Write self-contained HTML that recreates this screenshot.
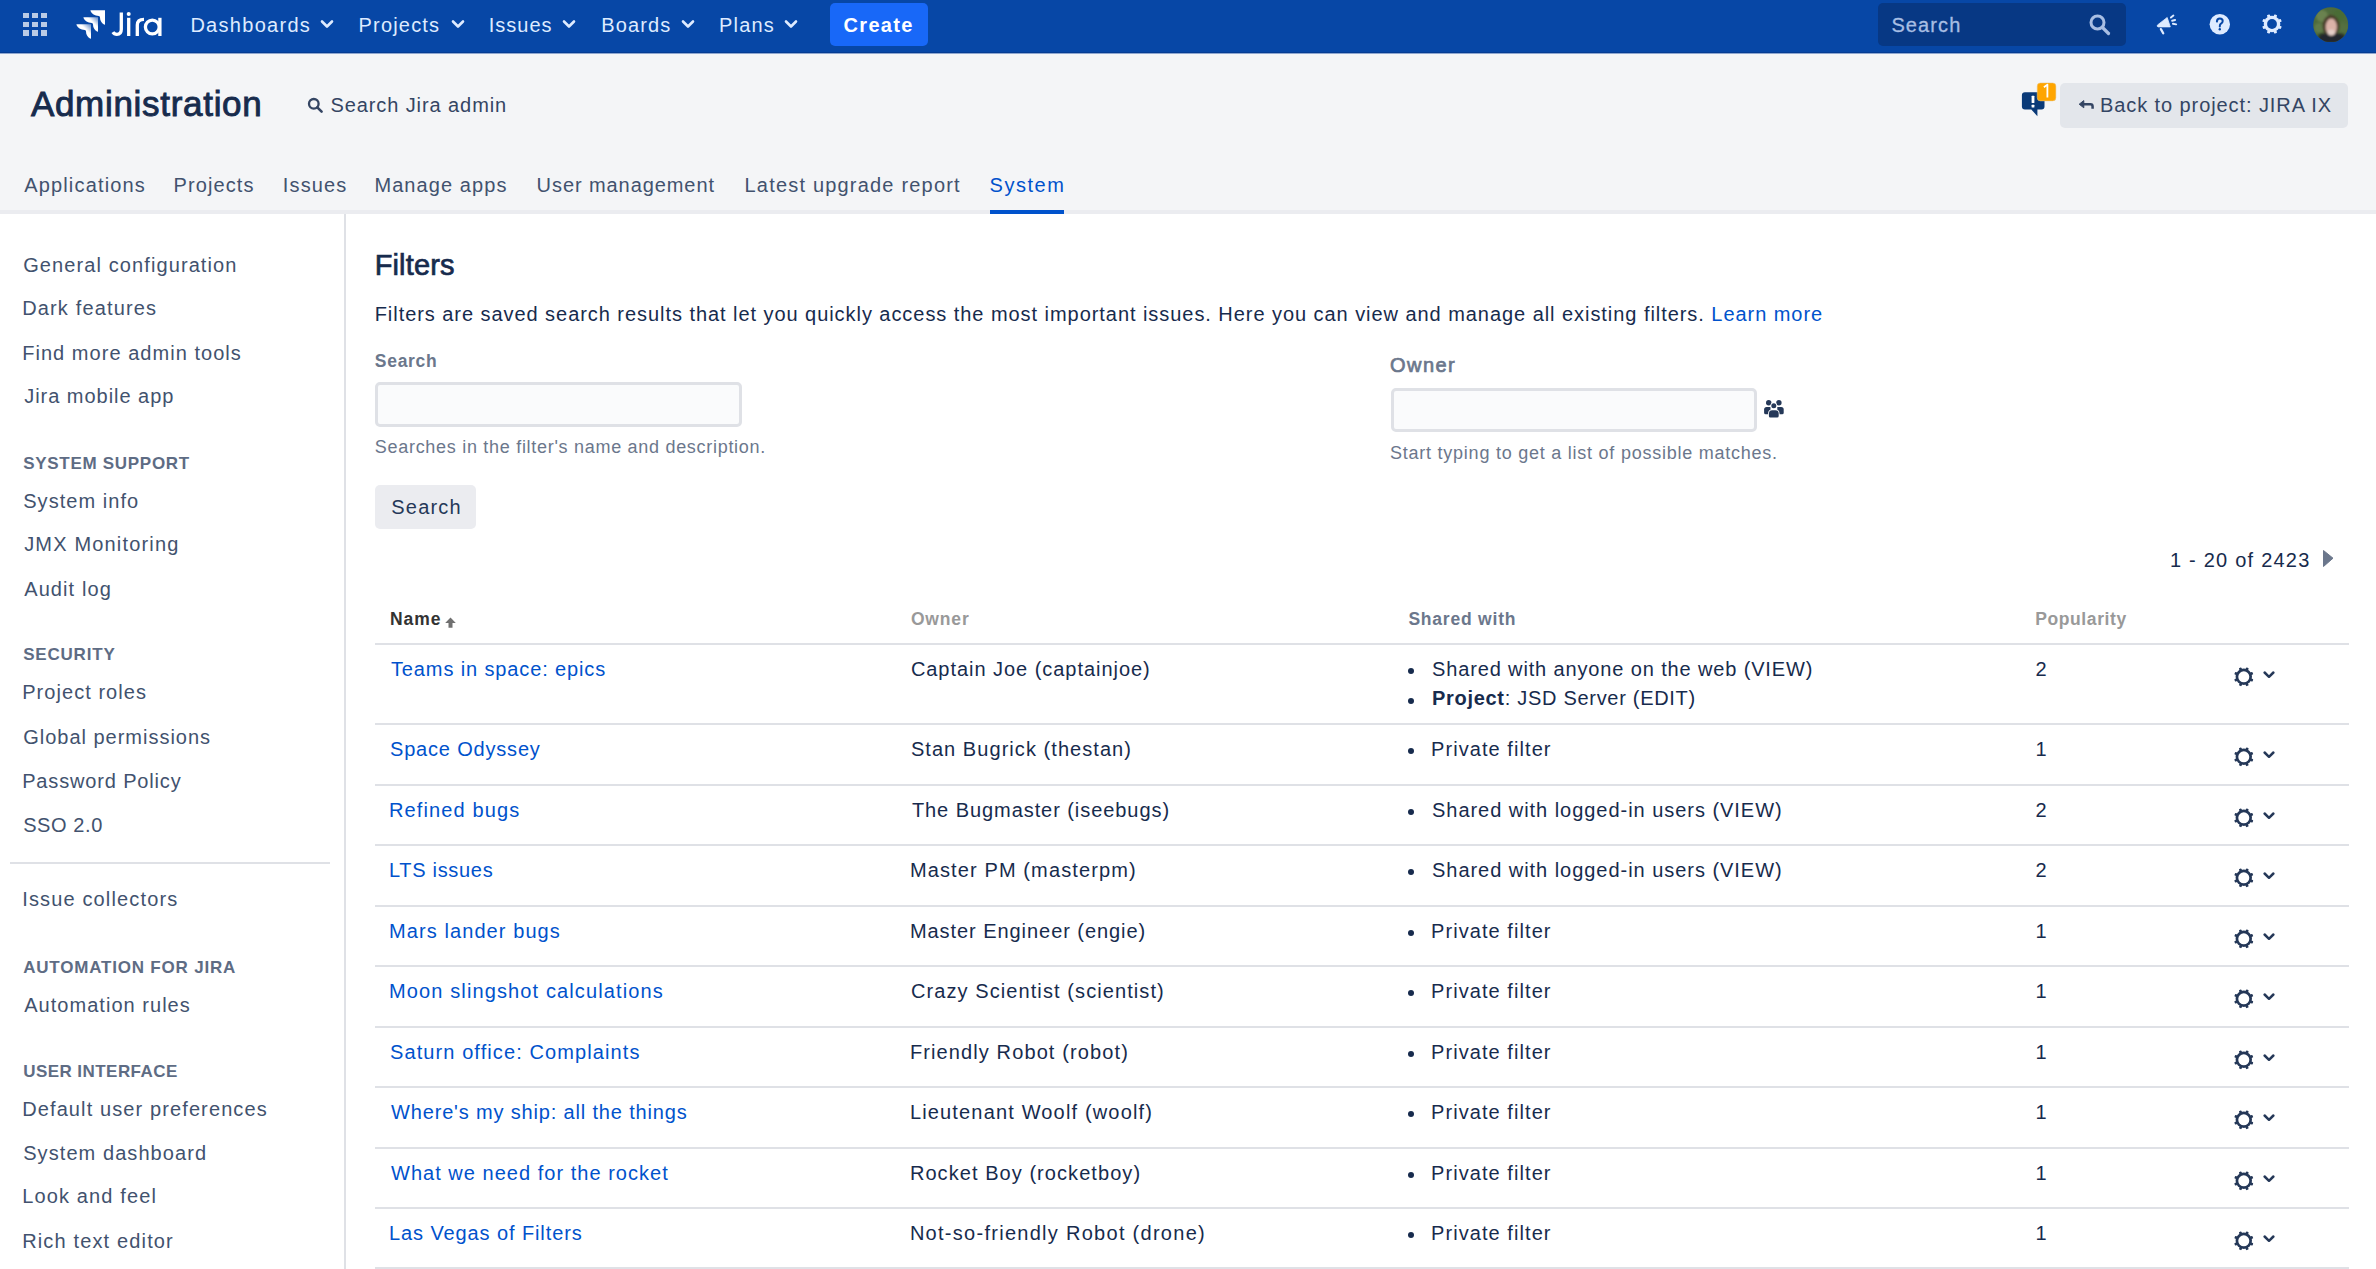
<!DOCTYPE html>
<html><head><meta charset="utf-8"><title>Filters - Jira Administration</title>
<style>
html,body{margin:0;padding:0;width:2376px;height:1269px;overflow:hidden;background:#fff;font-family:"Liberation Sans", sans-serif}
.t{position:absolute;white-space:nowrap;font-family:"Liberation Sans", sans-serif}
b{font-weight:700}
</style></head><body>
<div style="position:absolute;left:0px;top:0px;width:2376px;height:53px;background:#0747A6"></div>
<div style="position:absolute;left:0px;top:53px;width:2376px;height:157px;background:#F4F5F7"></div>
<div style="position:absolute;left:0px;top:52px;width:2376px;height:1px;background:#053C92"></div>
<div style="position:absolute;left:0px;top:53px;width:2376px;height:1px;background:#8FA7D0"></div>
<div style="position:absolute;left:0px;top:210px;width:2376px;height:4px;background:#EBECF0"></div>
<div style="position:absolute;left:344px;top:214px;width:2px;height:1055px;background:#DFE1E6"></div>
<div style="position:absolute;left:23px;top:12.6px;width:6px;height:5.6px;background:rgba(255,255,255,0.72)"></div>
<div style="position:absolute;left:23px;top:21.5px;width:6px;height:5.6px;background:rgba(255,255,255,0.72)"></div>
<div style="position:absolute;left:23px;top:30.4px;width:6px;height:5.6px;background:rgba(255,255,255,0.72)"></div>
<div style="position:absolute;left:32px;top:12.6px;width:6px;height:5.6px;background:rgba(255,255,255,0.72)"></div>
<div style="position:absolute;left:32px;top:21.5px;width:6px;height:5.6px;background:rgba(255,255,255,0.72)"></div>
<div style="position:absolute;left:32px;top:30.4px;width:6px;height:5.6px;background:rgba(255,255,255,0.72)"></div>
<div style="position:absolute;left:41px;top:12.6px;width:6px;height:5.6px;background:rgba(255,255,255,0.72)"></div>
<div style="position:absolute;left:41px;top:21.5px;width:6px;height:5.6px;background:rgba(255,255,255,0.72)"></div>
<div style="position:absolute;left:41px;top:30.4px;width:6px;height:5.6px;background:rgba(255,255,255,0.72)"></div>
<svg style="position:absolute;left:70px;top:5px" width="40" height="40" viewBox="0 0 40 40">
<defs>
<linearGradient id="lg1" x1="1" y1="0" x2="0.35" y2="0.65"><stop offset="0" stop-color="#fff" stop-opacity="0.35"/><stop offset="0.55" stop-color="#fff" stop-opacity="1"/></linearGradient>
</defs>
<path d="M20.8,5.2 H35 V19.2 C35,19.8 34.4,19.9 34,19.6 C31.5,18 30,15.5 30,12.5 C30,11.8 29.6,11.2 28.8,11.1 C24.6,10.6 21.8,8.8 20.5,6 C20.3,5.6 20.4,5.2 20.8,5.2 Z" fill="#fff"/>
<path d="M13.8,12.2 H28 V26.2 C28,26.8 27.4,26.9 27,26.6 C24.5,25 23,22.5 23,19.5 C23,18.8 22.6,18.2 21.8,18.1 C17.6,17.6 14.8,15.8 13.5,13 C13.3,12.6 13.4,12.2 13.8,12.2 Z" fill="url(#lg1)"/>
<path d="M6.8,19.2 H21 V33.2 C21,33.8 20.4,33.9 20,33.6 C17.5,32 16,29.5 16,26.5 C16,25.8 15.6,25.2 14.8,25.1 C10.6,24.6 7.8,22.8 6.5,20 C6.3,19.6 6.4,19.2 6.8,19.2 Z" fill="url(#lg1)"/>
</svg>
<svg style="position:absolute;left:105px;top:8px" width="62" height="32" viewBox="105 8 62 32" fill="none" stroke="#fff" stroke-width="3.3">
<path d="M121.3,12.6 V29.2 Q121.3,34.3 116.9,34.3 Q114.2,34.3 112.9,32.1" stroke-linecap="butt"/>
<path d="M128.7,17.8 V36"/><circle cx="128.7" cy="13.9" r="2" fill="#fff" stroke="none"/>
<path d="M137.3,36 V25 Q137.3,19.3 144,19.3"/>
<circle cx="152.3" cy="27" r="6.9"/><path d="M159.9,17.8 V36"/>
</svg>
<div class="t " style="left:190.4px;top:14.67px;font-size:20px;line-height:20px;color:#DEEBFF;font-weight:400;letter-spacing:1.289px;">Dashboards</div>
<svg style="position:absolute;left:320.4px;top:19px" width="14" height="10" viewBox="0 0 14 10"><path d="M2 2.5 L7 7.5 L12 2.5" fill="none" stroke="#DEEBFF" stroke-width="2.6" stroke-linecap="round" stroke-linejoin="round"/></svg>
<div class="t " style="left:358.6px;top:14.67px;font-size:20px;line-height:20px;color:#DEEBFF;font-weight:400;letter-spacing:1.171px;">Projects</div>
<svg style="position:absolute;left:451px;top:19px" width="14" height="10" viewBox="0 0 14 10"><path d="M2 2.5 L7 7.5 L12 2.5" fill="none" stroke="#DEEBFF" stroke-width="2.6" stroke-linecap="round" stroke-linejoin="round"/></svg>
<div class="t " style="left:488.8px;top:14.67px;font-size:20px;line-height:20px;color:#DEEBFF;font-weight:400;letter-spacing:1.0px;">Issues</div>
<svg style="position:absolute;left:562.4px;top:19px" width="14" height="10" viewBox="0 0 14 10"><path d="M2 2.5 L7 7.5 L12 2.5" fill="none" stroke="#DEEBFF" stroke-width="2.6" stroke-linecap="round" stroke-linejoin="round"/></svg>
<div class="t " style="left:601.2px;top:14.67px;font-size:20px;line-height:20px;color:#DEEBFF;font-weight:400;letter-spacing:1.16px;">Boards</div>
<svg style="position:absolute;left:681px;top:19px" width="14" height="10" viewBox="0 0 14 10"><path d="M2 2.5 L7 7.5 L12 2.5" fill="none" stroke="#DEEBFF" stroke-width="2.6" stroke-linecap="round" stroke-linejoin="round"/></svg>
<div class="t " style="left:719.0px;top:14.67px;font-size:20px;line-height:20px;color:#DEEBFF;font-weight:400;letter-spacing:1.2px;">Plans</div>
<svg style="position:absolute;left:784.3px;top:19px" width="14" height="10" viewBox="0 0 14 10"><path d="M2 2.5 L7 7.5 L12 2.5" fill="none" stroke="#DEEBFF" stroke-width="2.6" stroke-linecap="round" stroke-linejoin="round"/></svg>
<div style="position:absolute;left:830px;top:3px;width:98px;height:43px;background:#1868F8;border-radius:5px"></div>
<div class="t " style="left:843.6px;top:15.47px;font-size:20px;line-height:20px;color:#fff;font-weight:700;letter-spacing:1.28px;">Create</div>
<div style="position:absolute;left:1878px;top:3px;width:248px;height:43px;background:#073884;border-radius:5px"></div>
<div class="t " style="left:1891.4px;top:15.37px;font-size:20px;line-height:20px;color:#A8BEE3;font-weight:400;letter-spacing:1.12px;-webkit-text-stroke:0.3px #A8BEE3">Search</div>
<svg style="position:absolute;left:2088px;top:13px" width="24" height="24" viewBox="0 0 24 24"><circle cx="9.5" cy="9.5" r="6.5" fill="none" stroke="#A8BEE3" stroke-width="3"/><path d="M14.5 14.5 L20.5 20.5" stroke="#A8BEE3" stroke-width="3.2" stroke-linecap="round"/></svg>
<svg style="position:absolute;left:2150px;top:8px" width="30" height="30" viewBox="0 0 30 30">
<path d="M7.6,16.9 Q6.3,18.3 8.2,18.9 L20.3,18.9 L17.2,9.5 Z" fill="#DEEBFF" stroke="#DEEBFF" stroke-width="0.8" stroke-linejoin="round"/>
<path d="M10.9,21.1 L13.2,25.2" stroke="#DEEBFF" stroke-width="2.3" stroke-linecap="round"/>
<path d="M20.9,9.6 L23.4,7.6 M22.1,12.7 L25.1,12 M22.9,15.7 L26.2,16.4" stroke="#DEEBFF" stroke-width="1.9" stroke-linecap="round"/>
</svg>
<svg style="position:absolute;left:2209px;top:14px" width="22" height="22" viewBox="0 0 22 22"><circle cx="10.8" cy="10.2" r="10.2" fill="#DEEBFF"/>
<path d="M7.9,7.6 Q8,4.4 10.9,4.4 Q13.7,4.4 13.7,7.1 Q13.7,8.8 12,9.7 Q10.8,10.4 10.8,11.9 L10.8,12.4" fill="none" stroke="#0747A6" stroke-width="2" stroke-linecap="round"/>
<circle cx="10.8" cy="15.2" r="1.2" fill="#0747A6"/></svg>
<svg style="position:absolute;left:2261.30px;top:13.20px" width="22.00" height="22.00" viewBox="-11.00 -11.00 22.00 22.00"><circle r="8.3" fill="#DEEBFF"/><rect x="-1.50" y="-10.00" width="3.00" height="10.00" rx="0.7" transform="rotate(22.5)" fill="#DEEBFF"/><rect x="-1.50" y="-10.00" width="3.00" height="10.00" rx="0.7" transform="rotate(67.5)" fill="#DEEBFF"/><rect x="-1.50" y="-10.00" width="3.00" height="10.00" rx="0.7" transform="rotate(112.5)" fill="#DEEBFF"/><rect x="-1.50" y="-10.00" width="3.00" height="10.00" rx="0.7" transform="rotate(157.5)" fill="#DEEBFF"/><rect x="-1.50" y="-10.00" width="3.00" height="10.00" rx="0.7" transform="rotate(202.5)" fill="#DEEBFF"/><rect x="-1.50" y="-10.00" width="3.00" height="10.00" rx="0.7" transform="rotate(247.5)" fill="#DEEBFF"/><rect x="-1.50" y="-10.00" width="3.00" height="10.00" rx="0.7" transform="rotate(292.5)" fill="#DEEBFF"/><rect x="-1.50" y="-10.00" width="3.00" height="10.00" rx="0.7" transform="rotate(337.5)" fill="#DEEBFF"/><circle r="4.9" fill="#0747A6"/></svg>
<svg style="position:absolute;left:2313px;top:6.5px" width="35.5" height="35.5" viewBox="0 0 35.5 35.5">
<defs><clipPath id="avc"><circle cx="17.75" cy="17.75" r="17.5"/></clipPath><filter id="avb" x="-20%" y="-20%" width="140%" height="140%"><feGaussianBlur stdDeviation="0.9"/></filter></defs>
<g clip-path="url(#avc)"><rect width="35.5" height="35.5" fill="#4f6b3c"/>
<g filter="url(#avb)">
<circle cx="9" cy="9" r="6" fill="#6a8250"/><circle cx="26" cy="8" r="6" fill="#4a6c34"/><circle cx="30" cy="21" r="5" fill="#55703f"/><circle cx="6" cy="21" r="5" fill="#607a48"/><circle cx="9" cy="30" r="4" fill="#2f3d28"/><circle cx="28" cy="30" r="4" fill="#2f3a2c"/>
<ellipse cx="18" cy="19" rx="8.5" ry="11" fill="#4a3e2a"/>
<path d="M4,36 Q6,27 13,26.5 L23,26.5 Q31,27 33,36 Z" fill="#24252d"/>
<ellipse cx="18.3" cy="20" rx="5.6" ry="8.4" fill="#dcb3a8"/>
<ellipse cx="18.3" cy="25.5" rx="3.6" ry="3" fill="#e6cfc8"/>
</g></g></svg>
<div class="t " style="left:30.9px;top:86.37px;font-size:35px;line-height:35px;color:#172B4D;font-weight:400;letter-spacing:0.7px;-webkit-text-stroke:0.9px #172B4D">Administration</div>
<svg style="position:absolute;left:307px;top:97px" width="17" height="17" viewBox="0 0 17 17"><circle cx="6.8" cy="6.8" r="4.8" fill="none" stroke="#344563" stroke-width="2.3"/><path d="M10.3 10.3 L14.6 14.6" stroke="#344563" stroke-width="2.6" stroke-linecap="round"/></svg>
<div class="t " style="left:330.4px;top:95.17px;font-size:20px;line-height:20px;color:#344563;font-weight:400;letter-spacing:0.913px;">Search Jira admin</div>
<svg style="position:absolute;left:2015px;top:78px" width="48" height="44" viewBox="0 0 48 44">
<path d="M10,14.2 H26.5 Q29.5,14.2 29.5,17.2 V28.6 Q29.5,31.6 26.5,31.6 H22.4 V38.3 L16.3,31.6 H10 Q6.9,31.6 6.9,28.6 V17.2 Q6.9,14.2 10,14.2 Z" fill="#0A3A78"/>
<rect x="16.6" y="17.7" width="2.8" height="7.3" rx="0.5" fill="#fff"/><rect x="16.6" y="26.7" width="2.8" height="2.8" rx="0.5" fill="#fff"/>
<rect x="22.2" y="4.9" width="18.7" height="18" rx="3.2" fill="#FFA500" stroke="#E8C98A" stroke-width="0.5"/>
<path d="M28.9,9.2 L32.4,6.6 L32.4,19.6" fill="none" stroke="#fff" stroke-width="1.8" stroke-linejoin="round"/>
</svg>
<div style="position:absolute;left:2060px;top:83px;width:288px;height:45px;background:#E3E6EB;border-radius:5px"></div>
<svg style="position:absolute;left:2078px;top:99px" width="17" height="12" viewBox="0 0 17 12"><path d="M5.8 1.6 L1.2 5.2 L5.8 8.8 Z" fill="#344563" stroke="#344563" stroke-width="1" stroke-linejoin="round"/><path d="M4.5 5.2 L12.5 5.2 Q14.6 5.2 14.6 7.4 L14.6 9.8" fill="none" stroke="#344563" stroke-width="2.5"/></svg>
<div class="t " style="left:2100.0px;top:94.97px;font-size:20px;line-height:20px;color:#344563;font-weight:400;letter-spacing:0.913px;">Back to project: JIRA IX</div>
<div class="t " style="left:24.2px;top:174.87px;font-size:20px;line-height:20px;color:#42526E;font-weight:400;letter-spacing:1.164px;">Applications</div>
<div class="t " style="left:173.5px;top:174.87px;font-size:20px;line-height:20px;color:#42526E;font-weight:400;letter-spacing:1.114px;">Projects</div>
<div class="t " style="left:282.8px;top:174.87px;font-size:20px;line-height:20px;color:#42526E;font-weight:400;letter-spacing:1.14px;">Issues</div>
<div class="t " style="left:374.4px;top:174.87px;font-size:20px;line-height:20px;color:#42526E;font-weight:400;letter-spacing:1.08px;">Manage apps</div>
<div class="t " style="left:536.6px;top:174.87px;font-size:20px;line-height:20px;color:#42526E;font-weight:400;letter-spacing:0.921px;">User management</div>
<div class="t " style="left:744.5px;top:174.87px;font-size:20px;line-height:20px;color:#42526E;font-weight:400;letter-spacing:1.195px;">Latest upgrade report</div>
<div class="t " style="left:989.5px;top:174.87px;font-size:20px;line-height:20px;color:#0052CC;font-weight:400;letter-spacing:1.54px;">System</div>
<div style="position:absolute;left:990px;top:210px;width:74px;height:4px;background:#0052CC"></div>
<div class="t " style="left:23.2px;top:255.37px;font-size:20px;line-height:20px;color:#42526E;font-weight:400;letter-spacing:1.1px;">General configuration</div>
<div class="t " style="left:22.2px;top:297.97px;font-size:20px;line-height:20px;color:#42526E;font-weight:400;letter-spacing:1.15px;">Dark features</div>
<div class="t " style="left:22.2px;top:342.97px;font-size:20px;line-height:20px;color:#42526E;font-weight:400;letter-spacing:1.04px;">Find more admin tools</div>
<div class="t " style="left:24.2px;top:385.87px;font-size:20px;line-height:20px;color:#42526E;font-weight:400;letter-spacing:0.971px;">Jira mobile app</div>
<div class="t " style="left:23.2px;top:455.11px;font-size:17px;line-height:17px;color:#5E6C84;font-weight:700;letter-spacing:0.708px;">SYSTEM SUPPORT</div>
<div class="t " style="left:23.2px;top:491.47px;font-size:20px;line-height:20px;color:#42526E;font-weight:400;letter-spacing:1.05px;">System info</div>
<div class="t " style="left:24.2px;top:534.37px;font-size:20px;line-height:20px;color:#42526E;font-weight:400;letter-spacing:1.169px;">JMX Monitoring</div>
<div class="t " style="left:24.2px;top:579.07px;font-size:20px;line-height:20px;color:#42526E;font-weight:400;letter-spacing:1.1px;">Audit log</div>
<div class="t " style="left:23.2px;top:646.41px;font-size:17px;line-height:17px;color:#5E6C84;font-weight:700;letter-spacing:0.8px;">SECURITY</div>
<div class="t " style="left:22.2px;top:682.07px;font-size:20px;line-height:20px;color:#42526E;font-weight:400;letter-spacing:1.05px;">Project roles</div>
<div class="t " style="left:23.2px;top:727.27px;font-size:20px;line-height:20px;color:#42526E;font-weight:400;letter-spacing:0.988px;">Global permissions</div>
<div class="t " style="left:22.2px;top:770.67px;font-size:20px;line-height:20px;color:#42526E;font-weight:400;letter-spacing:0.843px;">Password Policy</div>
<div class="t " style="left:23.2px;top:815.27px;font-size:20px;line-height:20px;color:#42526E;font-weight:400;letter-spacing:0.583px;">SSO 2.0</div>
<div class="t " style="left:22.2px;top:889.47px;font-size:20px;line-height:20px;color:#42526E;font-weight:400;letter-spacing:1.147px;">Issue collectors</div>
<div class="t " style="left:23.2px;top:958.81px;font-size:17px;line-height:17px;color:#5E6C84;font-weight:700;letter-spacing:0.8px;">AUTOMATION FOR JIRA</div>
<div class="t " style="left:24.2px;top:995.17px;font-size:20px;line-height:20px;color:#42526E;font-weight:400;letter-spacing:1.033px;">Automation rules</div>
<div class="t " style="left:23.2px;top:1062.51px;font-size:17px;line-height:17px;color:#5E6C84;font-weight:700;letter-spacing:0.446px;">USER INTERFACE</div>
<div class="t " style="left:22.2px;top:1098.87px;font-size:20px;line-height:20px;color:#42526E;font-weight:400;letter-spacing:1.109px;">Default user preferences</div>
<div class="t " style="left:23.2px;top:1143.47px;font-size:20px;line-height:20px;color:#42526E;font-weight:400;letter-spacing:1.073px;">System dashboard</div>
<div class="t " style="left:22.2px;top:1186.27px;font-size:20px;line-height:20px;color:#42526E;font-weight:400;letter-spacing:1.133px;">Look and feel</div>
<div class="t " style="left:22.2px;top:1231.07px;font-size:20px;line-height:20px;color:#42526E;font-weight:400;letter-spacing:1.147px;">Rich text editor</div>
<div style="position:absolute;left:10px;top:862px;width:320px;height:2px;background:#DFE1E6"></div>
<div class="t " style="left:374.7px;top:251.25px;font-size:29px;line-height:29px;color:#172B4D;font-weight:400;letter-spacing:0.133px;-webkit-text-stroke:0.7px #172B4D">Filters</div>
<div class="t " style="left:374.7px;top:303.97px;font-size:20px;line-height:20px;color:#172B4D;font-weight:400;letter-spacing:0.947px;">Filters are saved search results that let you quickly access the most important issues. Here you can view and manage all existing filters. <span style="color:#0052CC">Learn more</span></div>
<div class="t " style="left:374.8px;top:353.19px;font-size:17.5px;line-height:17.5px;color:#6B778C;font-weight:700;letter-spacing:0.72px;">Search</div>
<div style="position:absolute;left:375px;top:382px;width:367px;height:45px;background:#FAFBFC;border:3px solid #DFE1E6;border-radius:5px;box-sizing:border-box"></div>
<div class="t " style="left:374.8px;top:438.26px;font-size:18px;line-height:18px;color:#6B778C;font-weight:400;letter-spacing:0.707px;">Searches in the filter's name and description.</div>
<div style="position:absolute;left:375px;top:485px;width:101px;height:44px;background:#EBECF0;border-radius:5px"></div>
<div class="t " style="left:391.3px;top:497.27px;font-size:20px;line-height:20px;color:#253858;font-weight:400;letter-spacing:1.2px;">Search</div>
<div class="t " style="left:1390.0px;top:355.07px;font-size:20px;line-height:20px;color:#6B778C;font-weight:400;letter-spacing:1.45px;-webkit-text-stroke:0.7px #6B778C">Owner</div>
<div style="position:absolute;left:1391px;top:388px;width:366px;height:44px;background:#FAFBFC;border:3px solid #DFE1E6;border-radius:5px;box-sizing:border-box"></div>
<svg style="position:absolute;left:1760px;top:396px" width="28" height="26" viewBox="1760 396 28 26">
<circle cx="1768.7" cy="402.7" r="2.7" fill="#253858"/><circle cx="1778.9" cy="402.7" r="2.7" fill="#253858"/>
<path d="M1764.1,409.6 Q1764.1,407.1 1766.6,407.1 L1770.5,407.1 L1770.5,414.3 L1765.6,414.3 Q1764.1,414.3 1764.1,412.8 Z" fill="#253858"/>
<path d="M1783.7,409.6 Q1783.7,407.1 1781.2,407.1 L1777.3,407.1 L1777.3,414.3 L1782.2,414.3 Q1783.7,414.3 1783.7,412.8 Z" fill="#253858"/>
<circle cx="1773.8" cy="405.8" r="3.3" fill="#fff"/><circle cx="1773.8" cy="405.8" r="2.5" fill="#253858"/>
<path d="M1768.1,413.2 Q1768.1,409.4 1771.9,409.4 L1775.7,409.4 Q1779.5,409.4 1779.5,413.2 L1779.5,416.2 Q1779.5,418.3 1777.4,418.3 L1770.2,418.3 Q1768.1,418.3 1768.1,416.2 Z" fill="#fff"/>
<path d="M1768.9,413.6 Q1768.9,410.2 1772.3,410.2 L1775.3,410.2 Q1778.7,410.2 1778.7,413.6 L1778.7,416 Q1778.7,417.5 1777.2,417.5 L1770.4,417.5 Q1768.9,417.5 1768.9,416 Z" fill="#253858"/>
</svg>
<div class="t " style="left:1390.0px;top:444.46px;font-size:18px;line-height:18px;color:#6B778C;font-weight:400;letter-spacing:0.759px;">Start typing to get a list of possible matches.</div>
<div class="t " style="left:2169.9px;top:550.07px;font-size:20px;line-height:20px;color:#172B4D;font-weight:400;letter-spacing:1.231px;">1 - 20 of 2423</div>
<svg style="position:absolute;left:2322px;top:549px" width="13" height="19" viewBox="0 0 13 19"><path d="M1.5 1.5 L11 9.2 L1.5 17.5 Z" fill="#6B778C" stroke="#6B778C" stroke-width="1" stroke-linejoin="round"/></svg>
<div class="t " style="left:390.0px;top:610.69px;font-size:17.5px;line-height:17.5px;color:#333333;font-weight:700;letter-spacing:0.9px;">Name</div>
<svg style="position:absolute;left:444px;top:616px" width="13" height="13" viewBox="0 0 13 13"><path d="M6.5 1.5 L11.8 7 L8.5 7 L8.5 11.8 L4.5 11.8 L4.5 7 L1.2 7 Z" fill="#707070"/></svg>
<div class="t " style="left:910.9px;top:610.89px;font-size:17.5px;line-height:17.5px;color:#999999;font-weight:700;letter-spacing:0.85px;">Owner</div>
<div class="t " style="left:1408.4px;top:610.89px;font-size:17.5px;line-height:17.5px;color:#6B778C;font-weight:700;letter-spacing:0.79px;">Shared with</div>
<div class="t " style="left:2035.2px;top:610.99px;font-size:17.5px;line-height:17.5px;color:#999999;font-weight:700;letter-spacing:0.611px;">Popularity</div>
<div style="position:absolute;left:375px;top:643px;width:1974px;height:2px;background:#DFE1E6"></div>
<div class="t " style="left:391.0px;top:659.07px;font-size:20px;line-height:20px;color:#0052CC;font-weight:400;letter-spacing:0.87px;">Teams in space: epics</div>
<div class="t " style="left:910.9px;top:659.07px;font-size:20px;line-height:20px;color:#172B4D;font-weight:400;letter-spacing:0.957px;">Captain Joe (captainjoe)</div>
<div style="position:absolute;left:1407.5px;top:668.3px;width:6.0px;height:6.0px;background:#172B4D;border-radius:50%"></div>
<div class="t " style="left:1432.0px;top:659.07px;font-size:20px;line-height:20px;color:#172B4D;font-weight:400;letter-spacing:0.863px;">Shared with anyone on the web (VIEW)</div>
<div style="position:absolute;left:1407.5px;top:697.5999999999999px;width:6.0px;height:6.0px;background:#172B4D;border-radius:50%"></div>
<div class="t " style="left:1432.0px;top:688.37px;font-size:20px;line-height:20px;color:#172B4D;font-weight:400;letter-spacing:0.704px;"><b>Project</b>: JSD Server (EDIT)</div>
<div class="t " style="left:2035.5px;top:659.07px;font-size:20px;line-height:20px;color:#172B4D;font-weight:400;letter-spacing:0px;">2</div>
<svg style="position:absolute;left:2233.40px;top:665.60px" width="21.60" height="21.60" viewBox="-10.80 -10.80 21.60 21.60"><circle r="8.2" fill="#253858"/><rect x="-1.35" y="-9.80" width="2.70" height="9.80" rx="0.7" transform="rotate(22.5)" fill="#253858"/><rect x="-1.35" y="-9.80" width="2.70" height="9.80" rx="0.7" transform="rotate(67.5)" fill="#253858"/><rect x="-1.35" y="-9.80" width="2.70" height="9.80" rx="0.7" transform="rotate(112.5)" fill="#253858"/><rect x="-1.35" y="-9.80" width="2.70" height="9.80" rx="0.7" transform="rotate(157.5)" fill="#253858"/><rect x="-1.35" y="-9.80" width="2.70" height="9.80" rx="0.7" transform="rotate(202.5)" fill="#253858"/><rect x="-1.35" y="-9.80" width="2.70" height="9.80" rx="0.7" transform="rotate(247.5)" fill="#253858"/><rect x="-1.35" y="-9.80" width="2.70" height="9.80" rx="0.7" transform="rotate(292.5)" fill="#253858"/><rect x="-1.35" y="-9.80" width="2.70" height="9.80" rx="0.7" transform="rotate(337.5)" fill="#253858"/><circle r="5.5" fill="#fff"/></svg>
<svg style="position:absolute;left:2262px;top:669.7px" width="14" height="10" viewBox="0 0 14 10"><path d="M2.6 2.5 L7 6.8 L11.4 2.5" fill="none" stroke="#253858" stroke-width="2.5" stroke-linecap="round" stroke-linejoin="round"/></svg>
<div style="position:absolute;left:375px;top:723px;width:1974px;height:2px;background:#DFE1E6"></div>
<div class="t " style="left:390.0px;top:739.07px;font-size:20px;line-height:20px;color:#0052CC;font-weight:400;letter-spacing:0.817px;">Space Odyssey</div>
<div class="t " style="left:910.9px;top:739.07px;font-size:20px;line-height:20px;color:#172B4D;font-weight:400;letter-spacing:1.057px;">Stan Bugrick (thestan)</div>
<div style="position:absolute;left:1407.5px;top:748.3px;width:6.0px;height:6.0px;background:#172B4D;border-radius:50%"></div>
<div class="t " style="left:1431.0px;top:739.07px;font-size:20px;line-height:20px;color:#172B4D;font-weight:400;letter-spacing:1.069px;">Private filter</div>
<div class="t " style="left:2035.5px;top:739.07px;font-size:20px;line-height:20px;color:#172B4D;font-weight:400;letter-spacing:0px;">1</div>
<svg style="position:absolute;left:2233.40px;top:745.60px" width="21.60" height="21.60" viewBox="-10.80 -10.80 21.60 21.60"><circle r="8.2" fill="#253858"/><rect x="-1.35" y="-9.80" width="2.70" height="9.80" rx="0.7" transform="rotate(22.5)" fill="#253858"/><rect x="-1.35" y="-9.80" width="2.70" height="9.80" rx="0.7" transform="rotate(67.5)" fill="#253858"/><rect x="-1.35" y="-9.80" width="2.70" height="9.80" rx="0.7" transform="rotate(112.5)" fill="#253858"/><rect x="-1.35" y="-9.80" width="2.70" height="9.80" rx="0.7" transform="rotate(157.5)" fill="#253858"/><rect x="-1.35" y="-9.80" width="2.70" height="9.80" rx="0.7" transform="rotate(202.5)" fill="#253858"/><rect x="-1.35" y="-9.80" width="2.70" height="9.80" rx="0.7" transform="rotate(247.5)" fill="#253858"/><rect x="-1.35" y="-9.80" width="2.70" height="9.80" rx="0.7" transform="rotate(292.5)" fill="#253858"/><rect x="-1.35" y="-9.80" width="2.70" height="9.80" rx="0.7" transform="rotate(337.5)" fill="#253858"/><circle r="5.5" fill="#fff"/></svg>
<svg style="position:absolute;left:2262px;top:749.7px" width="14" height="10" viewBox="0 0 14 10"><path d="M2.6 2.5 L7 6.8 L11.4 2.5" fill="none" stroke="#253858" stroke-width="2.5" stroke-linecap="round" stroke-linejoin="round"/></svg>
<div style="position:absolute;left:375px;top:784px;width:1974px;height:2px;background:#DFE1E6"></div>
<div class="t " style="left:389.0px;top:800.07px;font-size:20px;line-height:20px;color:#0052CC;font-weight:400;letter-spacing:1.118px;">Refined bugs</div>
<div class="t " style="left:911.9px;top:800.07px;font-size:20px;line-height:20px;color:#172B4D;font-weight:400;letter-spacing:0.935px;">The Bugmaster (iseebugs)</div>
<div style="position:absolute;left:1407.5px;top:809.3px;width:6.0px;height:6.0px;background:#172B4D;border-radius:50%"></div>
<div class="t " style="left:1432.0px;top:800.07px;font-size:20px;line-height:20px;color:#172B4D;font-weight:400;letter-spacing:0.961px;">Shared with logged-in users (VIEW)</div>
<div class="t " style="left:2035.5px;top:800.07px;font-size:20px;line-height:20px;color:#172B4D;font-weight:400;letter-spacing:0px;">2</div>
<svg style="position:absolute;left:2233.40px;top:806.60px" width="21.60" height="21.60" viewBox="-10.80 -10.80 21.60 21.60"><circle r="8.2" fill="#253858"/><rect x="-1.35" y="-9.80" width="2.70" height="9.80" rx="0.7" transform="rotate(22.5)" fill="#253858"/><rect x="-1.35" y="-9.80" width="2.70" height="9.80" rx="0.7" transform="rotate(67.5)" fill="#253858"/><rect x="-1.35" y="-9.80" width="2.70" height="9.80" rx="0.7" transform="rotate(112.5)" fill="#253858"/><rect x="-1.35" y="-9.80" width="2.70" height="9.80" rx="0.7" transform="rotate(157.5)" fill="#253858"/><rect x="-1.35" y="-9.80" width="2.70" height="9.80" rx="0.7" transform="rotate(202.5)" fill="#253858"/><rect x="-1.35" y="-9.80" width="2.70" height="9.80" rx="0.7" transform="rotate(247.5)" fill="#253858"/><rect x="-1.35" y="-9.80" width="2.70" height="9.80" rx="0.7" transform="rotate(292.5)" fill="#253858"/><rect x="-1.35" y="-9.80" width="2.70" height="9.80" rx="0.7" transform="rotate(337.5)" fill="#253858"/><circle r="5.5" fill="#fff"/></svg>
<svg style="position:absolute;left:2262px;top:810.7px" width="14" height="10" viewBox="0 0 14 10"><path d="M2.6 2.5 L7 6.8 L11.4 2.5" fill="none" stroke="#253858" stroke-width="2.5" stroke-linecap="round" stroke-linejoin="round"/></svg>
<div style="position:absolute;left:375px;top:844px;width:1974px;height:2px;background:#DFE1E6"></div>
<div class="t " style="left:389.0px;top:860.07px;font-size:20px;line-height:20px;color:#0052CC;font-weight:400;letter-spacing:0.689px;">LTS issues</div>
<div class="t " style="left:909.9px;top:860.07px;font-size:20px;line-height:20px;color:#172B4D;font-weight:400;letter-spacing:1.121px;">Master PM (masterpm)</div>
<div style="position:absolute;left:1407.5px;top:869.3px;width:6.0px;height:6.0px;background:#172B4D;border-radius:50%"></div>
<div class="t " style="left:1432.0px;top:860.07px;font-size:20px;line-height:20px;color:#172B4D;font-weight:400;letter-spacing:0.961px;">Shared with logged-in users (VIEW)</div>
<div class="t " style="left:2035.5px;top:860.07px;font-size:20px;line-height:20px;color:#172B4D;font-weight:400;letter-spacing:0px;">2</div>
<svg style="position:absolute;left:2233.40px;top:866.60px" width="21.60" height="21.60" viewBox="-10.80 -10.80 21.60 21.60"><circle r="8.2" fill="#253858"/><rect x="-1.35" y="-9.80" width="2.70" height="9.80" rx="0.7" transform="rotate(22.5)" fill="#253858"/><rect x="-1.35" y="-9.80" width="2.70" height="9.80" rx="0.7" transform="rotate(67.5)" fill="#253858"/><rect x="-1.35" y="-9.80" width="2.70" height="9.80" rx="0.7" transform="rotate(112.5)" fill="#253858"/><rect x="-1.35" y="-9.80" width="2.70" height="9.80" rx="0.7" transform="rotate(157.5)" fill="#253858"/><rect x="-1.35" y="-9.80" width="2.70" height="9.80" rx="0.7" transform="rotate(202.5)" fill="#253858"/><rect x="-1.35" y="-9.80" width="2.70" height="9.80" rx="0.7" transform="rotate(247.5)" fill="#253858"/><rect x="-1.35" y="-9.80" width="2.70" height="9.80" rx="0.7" transform="rotate(292.5)" fill="#253858"/><rect x="-1.35" y="-9.80" width="2.70" height="9.80" rx="0.7" transform="rotate(337.5)" fill="#253858"/><circle r="5.5" fill="#fff"/></svg>
<svg style="position:absolute;left:2262px;top:870.7px" width="14" height="10" viewBox="0 0 14 10"><path d="M2.6 2.5 L7 6.8 L11.4 2.5" fill="none" stroke="#253858" stroke-width="2.5" stroke-linecap="round" stroke-linejoin="round"/></svg>
<div style="position:absolute;left:375px;top:905px;width:1974px;height:2px;background:#DFE1E6"></div>
<div class="t " style="left:389.0px;top:921.07px;font-size:20px;line-height:20px;color:#0052CC;font-weight:400;letter-spacing:1.087px;">Mars lander bugs</div>
<div class="t " style="left:909.9px;top:921.07px;font-size:20px;line-height:20px;color:#172B4D;font-weight:400;letter-spacing:0.945px;">Master Engineer (engie)</div>
<div style="position:absolute;left:1407.5px;top:930.3px;width:6.0px;height:6.0px;background:#172B4D;border-radius:50%"></div>
<div class="t " style="left:1431.0px;top:921.07px;font-size:20px;line-height:20px;color:#172B4D;font-weight:400;letter-spacing:1.069px;">Private filter</div>
<div class="t " style="left:2035.5px;top:921.07px;font-size:20px;line-height:20px;color:#172B4D;font-weight:400;letter-spacing:0px;">1</div>
<svg style="position:absolute;left:2233.40px;top:927.60px" width="21.60" height="21.60" viewBox="-10.80 -10.80 21.60 21.60"><circle r="8.2" fill="#253858"/><rect x="-1.35" y="-9.80" width="2.70" height="9.80" rx="0.7" transform="rotate(22.5)" fill="#253858"/><rect x="-1.35" y="-9.80" width="2.70" height="9.80" rx="0.7" transform="rotate(67.5)" fill="#253858"/><rect x="-1.35" y="-9.80" width="2.70" height="9.80" rx="0.7" transform="rotate(112.5)" fill="#253858"/><rect x="-1.35" y="-9.80" width="2.70" height="9.80" rx="0.7" transform="rotate(157.5)" fill="#253858"/><rect x="-1.35" y="-9.80" width="2.70" height="9.80" rx="0.7" transform="rotate(202.5)" fill="#253858"/><rect x="-1.35" y="-9.80" width="2.70" height="9.80" rx="0.7" transform="rotate(247.5)" fill="#253858"/><rect x="-1.35" y="-9.80" width="2.70" height="9.80" rx="0.7" transform="rotate(292.5)" fill="#253858"/><rect x="-1.35" y="-9.80" width="2.70" height="9.80" rx="0.7" transform="rotate(337.5)" fill="#253858"/><circle r="5.5" fill="#fff"/></svg>
<svg style="position:absolute;left:2262px;top:931.7px" width="14" height="10" viewBox="0 0 14 10"><path d="M2.6 2.5 L7 6.8 L11.4 2.5" fill="none" stroke="#253858" stroke-width="2.5" stroke-linecap="round" stroke-linejoin="round"/></svg>
<div style="position:absolute;left:375px;top:965px;width:1974px;height:2px;background:#DFE1E6"></div>
<div class="t " style="left:389.0px;top:981.07px;font-size:20px;line-height:20px;color:#0052CC;font-weight:400;letter-spacing:1.123px;">Moon slingshot calculations</div>
<div class="t " style="left:910.9px;top:981.07px;font-size:20px;line-height:20px;color:#172B4D;font-weight:400;letter-spacing:1.092px;">Crazy Scientist (scientist)</div>
<div style="position:absolute;left:1407.5px;top:990.3px;width:6.0px;height:6.0px;background:#172B4D;border-radius:50%"></div>
<div class="t " style="left:1431.0px;top:981.07px;font-size:20px;line-height:20px;color:#172B4D;font-weight:400;letter-spacing:1.069px;">Private filter</div>
<div class="t " style="left:2035.5px;top:981.07px;font-size:20px;line-height:20px;color:#172B4D;font-weight:400;letter-spacing:0px;">1</div>
<svg style="position:absolute;left:2233.40px;top:987.60px" width="21.60" height="21.60" viewBox="-10.80 -10.80 21.60 21.60"><circle r="8.2" fill="#253858"/><rect x="-1.35" y="-9.80" width="2.70" height="9.80" rx="0.7" transform="rotate(22.5)" fill="#253858"/><rect x="-1.35" y="-9.80" width="2.70" height="9.80" rx="0.7" transform="rotate(67.5)" fill="#253858"/><rect x="-1.35" y="-9.80" width="2.70" height="9.80" rx="0.7" transform="rotate(112.5)" fill="#253858"/><rect x="-1.35" y="-9.80" width="2.70" height="9.80" rx="0.7" transform="rotate(157.5)" fill="#253858"/><rect x="-1.35" y="-9.80" width="2.70" height="9.80" rx="0.7" transform="rotate(202.5)" fill="#253858"/><rect x="-1.35" y="-9.80" width="2.70" height="9.80" rx="0.7" transform="rotate(247.5)" fill="#253858"/><rect x="-1.35" y="-9.80" width="2.70" height="9.80" rx="0.7" transform="rotate(292.5)" fill="#253858"/><rect x="-1.35" y="-9.80" width="2.70" height="9.80" rx="0.7" transform="rotate(337.5)" fill="#253858"/><circle r="5.5" fill="#fff"/></svg>
<svg style="position:absolute;left:2262px;top:991.7px" width="14" height="10" viewBox="0 0 14 10"><path d="M2.6 2.5 L7 6.8 L11.4 2.5" fill="none" stroke="#253858" stroke-width="2.5" stroke-linecap="round" stroke-linejoin="round"/></svg>
<div style="position:absolute;left:375px;top:1026px;width:1974px;height:2px;background:#DFE1E6"></div>
<div class="t " style="left:390.0px;top:1042.07px;font-size:20px;line-height:20px;color:#0052CC;font-weight:400;letter-spacing:1.096px;">Saturn office: Complaints</div>
<div class="t " style="left:909.9px;top:1042.07px;font-size:20px;line-height:20px;color:#172B4D;font-weight:400;letter-spacing:1.114px;">Friendly Robot (robot)</div>
<div style="position:absolute;left:1407.5px;top:1051.3px;width:6.0px;height:6.0px;background:#172B4D;border-radius:50%"></div>
<div class="t " style="left:1431.0px;top:1042.07px;font-size:20px;line-height:20px;color:#172B4D;font-weight:400;letter-spacing:1.069px;">Private filter</div>
<div class="t " style="left:2035.5px;top:1042.07px;font-size:20px;line-height:20px;color:#172B4D;font-weight:400;letter-spacing:0px;">1</div>
<svg style="position:absolute;left:2233.40px;top:1048.60px" width="21.60" height="21.60" viewBox="-10.80 -10.80 21.60 21.60"><circle r="8.2" fill="#253858"/><rect x="-1.35" y="-9.80" width="2.70" height="9.80" rx="0.7" transform="rotate(22.5)" fill="#253858"/><rect x="-1.35" y="-9.80" width="2.70" height="9.80" rx="0.7" transform="rotate(67.5)" fill="#253858"/><rect x="-1.35" y="-9.80" width="2.70" height="9.80" rx="0.7" transform="rotate(112.5)" fill="#253858"/><rect x="-1.35" y="-9.80" width="2.70" height="9.80" rx="0.7" transform="rotate(157.5)" fill="#253858"/><rect x="-1.35" y="-9.80" width="2.70" height="9.80" rx="0.7" transform="rotate(202.5)" fill="#253858"/><rect x="-1.35" y="-9.80" width="2.70" height="9.80" rx="0.7" transform="rotate(247.5)" fill="#253858"/><rect x="-1.35" y="-9.80" width="2.70" height="9.80" rx="0.7" transform="rotate(292.5)" fill="#253858"/><rect x="-1.35" y="-9.80" width="2.70" height="9.80" rx="0.7" transform="rotate(337.5)" fill="#253858"/><circle r="5.5" fill="#fff"/></svg>
<svg style="position:absolute;left:2262px;top:1052.7px" width="14" height="10" viewBox="0 0 14 10"><path d="M2.6 2.5 L7 6.8 L11.4 2.5" fill="none" stroke="#253858" stroke-width="2.5" stroke-linecap="round" stroke-linejoin="round"/></svg>
<div style="position:absolute;left:375px;top:1086px;width:1974px;height:2px;background:#DFE1E6"></div>
<div class="t " style="left:391.0px;top:1102.07px;font-size:20px;line-height:20px;color:#0052CC;font-weight:400;letter-spacing:0.838px;">Where&#39;s my ship: all the things</div>
<div class="t " style="left:909.9px;top:1102.07px;font-size:20px;line-height:20px;color:#172B4D;font-weight:400;letter-spacing:1.161px;">Lieutenant Woolf (woolf)</div>
<div style="position:absolute;left:1407.5px;top:1111.3px;width:6.0px;height:6.0px;background:#172B4D;border-radius:50%"></div>
<div class="t " style="left:1431.0px;top:1102.07px;font-size:20px;line-height:20px;color:#172B4D;font-weight:400;letter-spacing:1.069px;">Private filter</div>
<div class="t " style="left:2035.5px;top:1102.07px;font-size:20px;line-height:20px;color:#172B4D;font-weight:400;letter-spacing:0px;">1</div>
<svg style="position:absolute;left:2233.40px;top:1108.60px" width="21.60" height="21.60" viewBox="-10.80 -10.80 21.60 21.60"><circle r="8.2" fill="#253858"/><rect x="-1.35" y="-9.80" width="2.70" height="9.80" rx="0.7" transform="rotate(22.5)" fill="#253858"/><rect x="-1.35" y="-9.80" width="2.70" height="9.80" rx="0.7" transform="rotate(67.5)" fill="#253858"/><rect x="-1.35" y="-9.80" width="2.70" height="9.80" rx="0.7" transform="rotate(112.5)" fill="#253858"/><rect x="-1.35" y="-9.80" width="2.70" height="9.80" rx="0.7" transform="rotate(157.5)" fill="#253858"/><rect x="-1.35" y="-9.80" width="2.70" height="9.80" rx="0.7" transform="rotate(202.5)" fill="#253858"/><rect x="-1.35" y="-9.80" width="2.70" height="9.80" rx="0.7" transform="rotate(247.5)" fill="#253858"/><rect x="-1.35" y="-9.80" width="2.70" height="9.80" rx="0.7" transform="rotate(292.5)" fill="#253858"/><rect x="-1.35" y="-9.80" width="2.70" height="9.80" rx="0.7" transform="rotate(337.5)" fill="#253858"/><circle r="5.5" fill="#fff"/></svg>
<svg style="position:absolute;left:2262px;top:1112.7px" width="14" height="10" viewBox="0 0 14 10"><path d="M2.6 2.5 L7 6.8 L11.4 2.5" fill="none" stroke="#253858" stroke-width="2.5" stroke-linecap="round" stroke-linejoin="round"/></svg>
<div style="position:absolute;left:375px;top:1147px;width:1974px;height:2px;background:#DFE1E6"></div>
<div class="t " style="left:391.0px;top:1163.07px;font-size:20px;line-height:20px;color:#0052CC;font-weight:400;letter-spacing:1.023px;">What we need for the rocket</div>
<div class="t " style="left:909.9px;top:1163.07px;font-size:20px;line-height:20px;color:#172B4D;font-weight:400;letter-spacing:1.062px;">Rocket Boy (rocketboy)</div>
<div style="position:absolute;left:1407.5px;top:1172.3px;width:6.0px;height:6.0px;background:#172B4D;border-radius:50%"></div>
<div class="t " style="left:1431.0px;top:1163.07px;font-size:20px;line-height:20px;color:#172B4D;font-weight:400;letter-spacing:1.069px;">Private filter</div>
<div class="t " style="left:2035.5px;top:1163.07px;font-size:20px;line-height:20px;color:#172B4D;font-weight:400;letter-spacing:0px;">1</div>
<svg style="position:absolute;left:2233.40px;top:1169.60px" width="21.60" height="21.60" viewBox="-10.80 -10.80 21.60 21.60"><circle r="8.2" fill="#253858"/><rect x="-1.35" y="-9.80" width="2.70" height="9.80" rx="0.7" transform="rotate(22.5)" fill="#253858"/><rect x="-1.35" y="-9.80" width="2.70" height="9.80" rx="0.7" transform="rotate(67.5)" fill="#253858"/><rect x="-1.35" y="-9.80" width="2.70" height="9.80" rx="0.7" transform="rotate(112.5)" fill="#253858"/><rect x="-1.35" y="-9.80" width="2.70" height="9.80" rx="0.7" transform="rotate(157.5)" fill="#253858"/><rect x="-1.35" y="-9.80" width="2.70" height="9.80" rx="0.7" transform="rotate(202.5)" fill="#253858"/><rect x="-1.35" y="-9.80" width="2.70" height="9.80" rx="0.7" transform="rotate(247.5)" fill="#253858"/><rect x="-1.35" y="-9.80" width="2.70" height="9.80" rx="0.7" transform="rotate(292.5)" fill="#253858"/><rect x="-1.35" y="-9.80" width="2.70" height="9.80" rx="0.7" transform="rotate(337.5)" fill="#253858"/><circle r="5.5" fill="#fff"/></svg>
<svg style="position:absolute;left:2262px;top:1173.7px" width="14" height="10" viewBox="0 0 14 10"><path d="M2.6 2.5 L7 6.8 L11.4 2.5" fill="none" stroke="#253858" stroke-width="2.5" stroke-linecap="round" stroke-linejoin="round"/></svg>
<div style="position:absolute;left:375px;top:1207px;width:1974px;height:2px;background:#DFE1E6"></div>
<div class="t " style="left:389.0px;top:1223.07px;font-size:20px;line-height:20px;color:#0052CC;font-weight:400;letter-spacing:0.9px;">Las Vegas of Filters</div>
<div class="t " style="left:909.9px;top:1223.07px;font-size:20px;line-height:20px;color:#172B4D;font-weight:400;letter-spacing:1.279px;">Not-so-friendly Robot (drone)</div>
<div style="position:absolute;left:1407.5px;top:1232.3px;width:6.0px;height:6.0px;background:#172B4D;border-radius:50%"></div>
<div class="t " style="left:1431.0px;top:1223.07px;font-size:20px;line-height:20px;color:#172B4D;font-weight:400;letter-spacing:1.069px;">Private filter</div>
<div class="t " style="left:2035.5px;top:1223.07px;font-size:20px;line-height:20px;color:#172B4D;font-weight:400;letter-spacing:0px;">1</div>
<svg style="position:absolute;left:2233.40px;top:1229.60px" width="21.60" height="21.60" viewBox="-10.80 -10.80 21.60 21.60"><circle r="8.2" fill="#253858"/><rect x="-1.35" y="-9.80" width="2.70" height="9.80" rx="0.7" transform="rotate(22.5)" fill="#253858"/><rect x="-1.35" y="-9.80" width="2.70" height="9.80" rx="0.7" transform="rotate(67.5)" fill="#253858"/><rect x="-1.35" y="-9.80" width="2.70" height="9.80" rx="0.7" transform="rotate(112.5)" fill="#253858"/><rect x="-1.35" y="-9.80" width="2.70" height="9.80" rx="0.7" transform="rotate(157.5)" fill="#253858"/><rect x="-1.35" y="-9.80" width="2.70" height="9.80" rx="0.7" transform="rotate(202.5)" fill="#253858"/><rect x="-1.35" y="-9.80" width="2.70" height="9.80" rx="0.7" transform="rotate(247.5)" fill="#253858"/><rect x="-1.35" y="-9.80" width="2.70" height="9.80" rx="0.7" transform="rotate(292.5)" fill="#253858"/><rect x="-1.35" y="-9.80" width="2.70" height="9.80" rx="0.7" transform="rotate(337.5)" fill="#253858"/><circle r="5.5" fill="#fff"/></svg>
<svg style="position:absolute;left:2262px;top:1233.7px" width="14" height="10" viewBox="0 0 14 10"><path d="M2.6 2.5 L7 6.8 L11.4 2.5" fill="none" stroke="#253858" stroke-width="2.5" stroke-linecap="round" stroke-linejoin="round"/></svg>
<div style="position:absolute;left:375px;top:1267px;width:1974px;height:2px;background:#DFE1E6"></div>
</body></html>
